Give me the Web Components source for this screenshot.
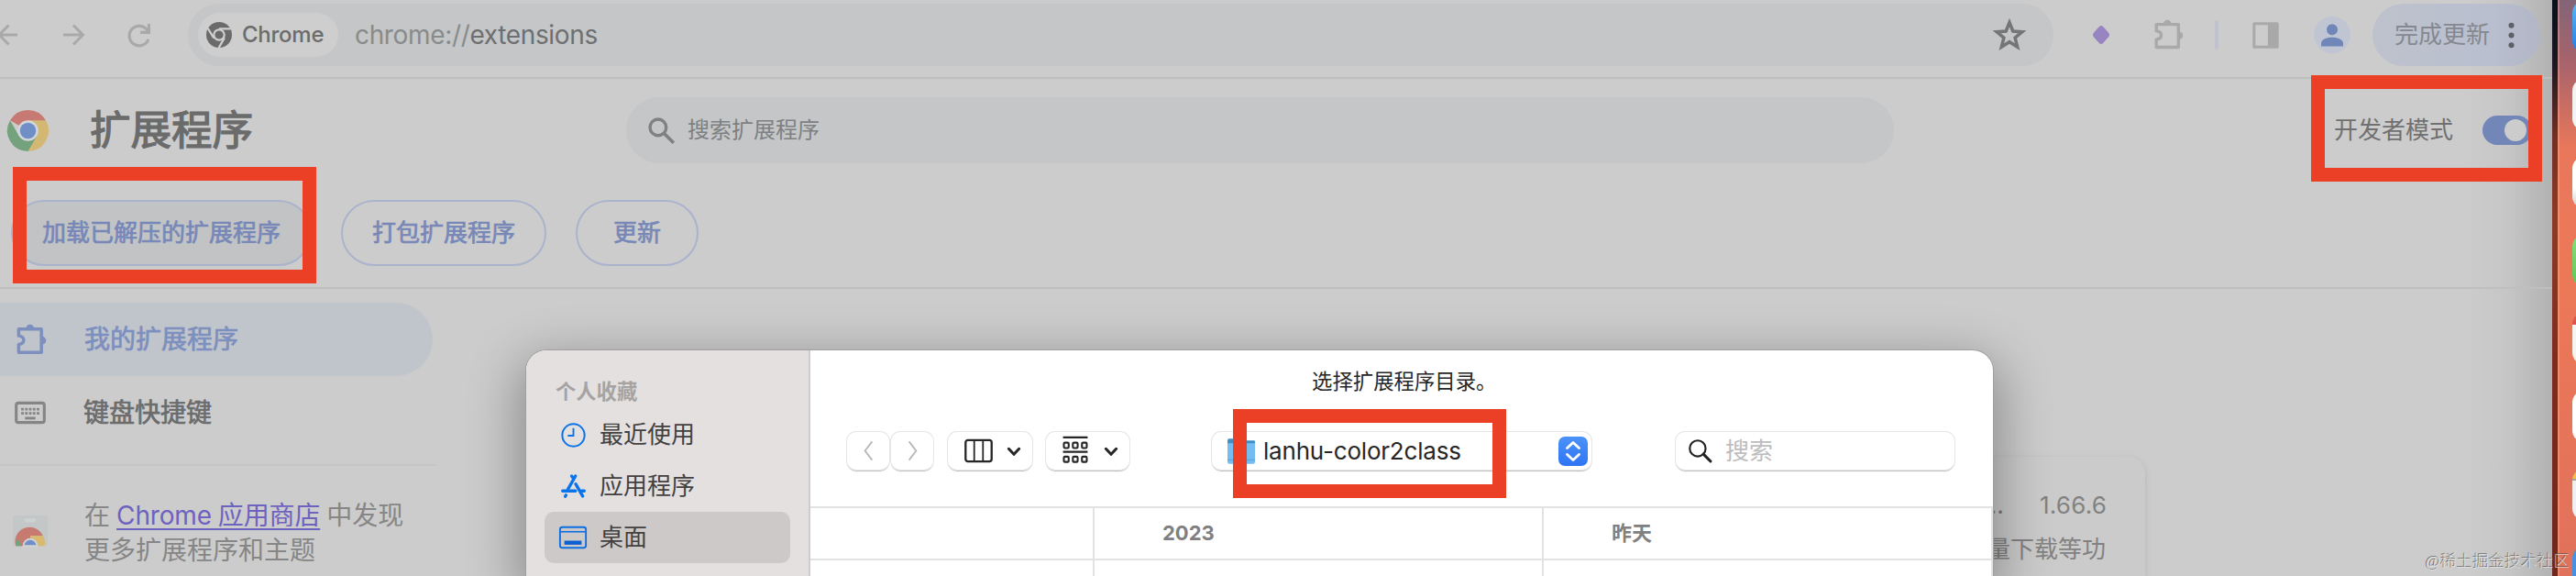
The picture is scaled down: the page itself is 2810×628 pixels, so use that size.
<!DOCTYPE html>
<html lang="zh-CN">
<head>
<meta charset="utf-8">
<title>扩展程序</title>
<style>
  html {
    height: 628px;
    overflow: hidden;
  }
  body {
    margin: 0;
    width: 2810px;
    height: 628px;
    overflow: hidden;
    position: relative;
    display: flex;
    font-family: Inter, "Noto Sans CJK SC", sans-serif;
    line-height: 1;
    background: #ccc;
  }
</style>
</head>
<body>
<browser-window>
  <tool-bar slot="toolbar"></tool-bar>
  <page-header slot="header" heading="扩展程序" placeholder="搜索扩展程序"></page-header>
  <action-bar slot="actions">
    <pill-button active>加载已解压的扩展程序</pill-button>
    <pill-button>打包扩展程序</pill-button>
    <pill-button>更新</pill-button>
  </action-bar>
  <side-menu slot="menu"></side-menu>
  <extension-card slot="card" version="1.66.6"></extension-card>
</browser-window>
<desktop-dock></desktop-dock>
<file-dialog heading="选择扩展程序目录。" folder="lanhu-color2class"></file-dialog>
<red-mark x="14" y="182" w="331" h="127"></red-mark>
<red-mark x="2521" y="82" w="252" h="116"></red-mark>
<red-mark x="1345" y="446" w="298" h="97"></red-mark>
<water-mark>@稀土掘金技术社区</water-mark>

<script>
const icons = {
  back: '<path d="M22 12H2M12.500 1.500 2 12l10.500 10.500" fill="none" stroke="currentColor" stroke-width="3"/>',
  forward: '<path d="M1 12h21M12 1.500 22.500 12 12 22.500" fill="none" stroke="currentColor" stroke-width="3"/>',
  reload: '<path d="M21 7A10.300 10.300 0 1 0 22 16M22.500 0v9H13.500" fill="none" stroke="currentColor" stroke-width="3"/>',
  chromeMono: '<circle cx="12" cy="12" r="12" fill="#6b6b6b"/><circle cx="12" cy="12" r="4.900" fill="#6b6b6b" stroke="#d0d0d0" stroke-width="1.900"/><path d="M12 6.300h11M7 14.900 1.400 5.800M17 14.900 11.700 24" stroke="#d0d0d0" stroke-width="1.900"/>',
  chrome: '<path d="M12 12 1.600 6A12 12 0 0 1 22.400 6Z" fill="#c77a73"/><path d="M12 12V6h10.400A12 12 0 0 1 12 24Z" fill="#d2b873"/><path d="M12 24A12 12 0 0 1 1.600 6L6.800 15 12 12l5.200 3Z" fill="#73a27c"/><circle cx="12" cy="12" r="6" fill="#d3d6db"/><circle cx="12" cy="12" r="4.700" fill="#718fc7"/>',
  search: '<circle cx="9" cy="9" r="7.300" fill="none" stroke="currentColor" stroke-width="2.800"/><path d="m14 14 9 9" stroke="currentColor" stroke-width="3"/>',
  star: '<path d="m12 2.500 2.700 6.700 7.100.500-5.500 4.600 1.800 7L12 17.400l-6.100 3.900 1.800-7-5.500-4.600 7.100-.500Z" fill="none" stroke="currentColor" stroke-width="2.500"/>',
  diamond: '<path d="M9.500 1.200q2.500-2.200 5 0l7.300 8q2 2.800 0 5.600l-7.300 8q-2.500 2.200-5 0l-7.300-8q-2-2.800 0-5.600Z" fill="#9884c0"/>',
  puzzle: '<path d="M3 4h17v17.500H3v-6c5-.500 5-6 0-6.500Z" fill="none" stroke="currentColor" stroke-width="2.400" stroke-linejoin="round"/><path d="M8.500 3.500a3 3 0 0 1 6 0ZM20.500 9.500a3 3 0 0 1 0 6Z" fill="currentColor"/>',
  panel: '<path d="M1.500 1.500h21v21h-21Z" fill="none" stroke="currentColor" stroke-width="2.500" stroke-linejoin="round"/><path d="M14 2h8v20h-8Z" fill="currentColor"/>',
  person: '<circle cx="12" cy="12" r="12" fill="#bfc5d3"/><circle cx="12" cy="8.500" r="3.600" fill="#7186b8"/><path d="M4.800 19.500v-1.800c0-5.500 14.400-5.500 14.400 0v1.800Z" fill="#7186b8"/>',
  dots: '<circle cx="12" cy="2.500" r="2.700"/><circle cx="12" cy="12" r="2.700"/><circle cx="12" cy="21.500" r="2.700"/>',
  keyboard: '<rect x="1.200" y="4.500" width="21.600" height="15" rx="1.700" fill="none" stroke="currentColor" stroke-width="2.200"/><path d="M5 9.300h14M5 12.500h14" stroke="currentColor" stroke-width="1.900" stroke-dasharray="2 1"/><path d="M8 16.200h8" stroke="currentColor" stroke-width="2"/>',
  store: '<path d="M0 1.500A1.500 1.500 0 0 1 1.500 0h21A1.500 1.500 0 0 1 24 1.500V21H0Z" fill="#c3c7c8"/><rect x="8" y="2" width="8" height="2.500" rx="1.200" fill="#d0d2d2"/><path d="M2 21a10 10 0 0 1 18.700-7H12v7Z" fill="#c77a70"/><path d="M2 21a10 10 0 0 1 1.400-5L6.500 21Z" fill="#73a27c"/><path d="M12 14h8.700A10 10 0 0 1 22 21H12Z" fill="#d8b96e"/><path d="M7.300 21a4.700 4.700 0 0 1 9.400 0Z" fill="#718fc7" stroke="#cfd2d6" stroke-width="1.200"/>',
  clock: '<circle cx="12" cy="12" r="10.800" fill="none" stroke="#0b74ea" stroke-width="1.800"/><path d="M12 5v7.500H6.500" fill="none" stroke="#0b74ea" stroke-width="1.700"/>',
  apps: '<g stroke="#0b74ea" stroke-width="3" stroke-linecap="round" fill="none"><path d="M10.300 1.800l1.500 2M14 1.800 6.700 14.500M14.200 9.500l6.800 11.800" /><path d="M1.500 16.200H14M19.800 16.200h2.700M4.800 20.300l-.700 1.200"/></g>',
  desktop: '<rect x=".7" y="3" width="22.600" height="18" rx="2" fill="none" stroke="#0b6fe2" stroke-width="1.500"/><path d="M1 7h22" stroke="#0b6fe2" stroke-width="1.300"/><path d="M4.500 14.800h15v3.500h-15Z" fill="#0b5fd0"/>',
  left: '<path d="M16 1.500 8 12l8 10.500" fill="none" stroke="currentColor" stroke-width="2"/>',
  right: '<path d="m8 1.500 8 10.500-8 10.500" fill="none" stroke="currentColor" stroke-width="2"/>',
  down: '<path d="m3.500 8 8.500 9 8.500-9" fill="none" stroke="currentColor" stroke-width="4.500" stroke-linecap="round" stroke-linejoin="round"/>',
  columns: '<rect x="1" y="3" width="22" height="18" rx="2" fill="none" stroke="currentColor" stroke-width="1.800"/><path d="M8.300 3v18M15.700 3v18" stroke="currentColor" stroke-width="1.400"/>',
  groups: '<g fill="none" stroke="currentColor" stroke-width="1.800"><path d="M.5 -1h23M.5 12.500h23"/><rect x="1.300" y="4" width="4.500" height="5" rx="1"/><rect x="9.700" y="4" width="4.500" height="5" rx="1"/><rect x="18.200" y="4" width="4.500" height="5" rx="1"/><rect x="1.300" y="17" width="4.500" height="5" rx="1"/><rect x="9.700" y="17" width="4.500" height="5" rx="1"/><rect x="18.200" y="17" width="4.500" height="5" rx="1"/></g>',
  folder: '<path d="M0 2.500Q0 1 1.500 1h6L9 2.500h14q1 0 1 1V7H0Z" fill="#3f8fc4"/><path d="M0 5h24v16q0 2-2 2H2q-2 0-2-2Z" fill="#75bdf0"/><path d="M0 19.500h24" stroke="#5ba6da"/>',
  stepper: '<path d="m6 8.700 6-5.500 6 5.500M6 15.300l6 5.500 6-5.500" fill="none" stroke="#fff" stroke-width="2.600" stroke-linecap="round" stroke-linejoin="round"/>',
  glass: '<circle cx="9.500" cy="9.500" r="8.300" fill="none" stroke="currentColor" stroke-width="2.100"/><path d="m15.500 15.500 7.500 7.500" stroke="currentColor" stroke-width="2.900" stroke-linecap="round"/>'
};

class BaseElement extends HTMLElement {
  connectedCallback() {
    if (this.shadowRoot) return;
    this.attachShadow({ mode: 'open' });
    const template = document.createElement('template');
    template.innerHTML = `<style>${this.styles()}</style>${this.markup()}`;
    this.shadowRoot.appendChild(template.content.cloneNode(true));
  }
}

/* <svg-icon name size>: one glyph of the table above, on a 24 unit grid */
class SvgIcon extends BaseElement {
  styles() {
    const size = this.getAttribute('size') || 24;
    return `
    :host { display: block; flex: none; width: ${size}px; height: ${size}px; }
    svg { display: block; width: 100%; height: 100%; overflow: visible; fill: currentColor; }
    `;
  }
  markup() {
    return `<svg viewBox="0 0 24 24">${icons[this.getAttribute('name')]}</svg>`;
  }
}
customElements.define('svg-icon', SvgIcon);

class BrowserWindow extends BaseElement {
  styles() {
    return `
    :host {
      display: flex;
      flex-direction: column;
      flex: none;
      width: 2784px;
      height: 628px;
      overflow: hidden;
      background: linear-gradient(90deg, #ccc 2690px, #c6c6c6 2735px, #b2b2b2 2784px);
    }
    .body { display: flex; justify-content: space-between; align-items: flex-start; }
    .card { padding: 183px 444px 0 0; }
    `;
  }
  markup() {
    return `
    <slot name="toolbar"></slot>
    <slot name="header"></slot>
    <slot name="actions"></slot>
    <div class="body">
      <slot name="menu"></slot>
      <div class="card"><slot name="card"></slot></div>
    </div>`;
  }
}
customElements.define('browser-window', BrowserWindow);

class ToolBar extends BaseElement {
  styles() {
    return `
    :host {
      box-sizing: border-box;
      display: flex;
      align-items: center;
      flex: none;
      height: 86px;
      padding-bottom: 8px;
      border-bottom: 2px solid #bebfbf;
      color: #a9a9a9;
    }
    .nav { display: flex; gap: 47px; width: 205px; }
    .omnibox {
      box-sizing: border-box;
      display: flex;
      align-items: center;
      width: 2035px;
      height: 68px;
      padding: 0 31px 0 11px;
      border-radius: 34px;
      background: #c4c6c8;
    }
    .chip {
      box-sizing: border-box;
      display: flex;
      align-items: center;
      gap: 11px;
      width: 153px;
      height: 48px;
      padding-left: 9px;
      border-radius: 24px;
      background: #cecece;
      color: #6c6c6c;
      font-size: 24px;
      font-weight: 500;
      letter-spacing: -.25px;
    }
    .url { flex: 1; padding-left: 18px; font-size: 28px; letter-spacing: -.35px; color: #888b8c; }
    .url b { font-weight: 400; color: #6d6f70; }
    .star { color: #737576; }
    .tools { display: flex; align-items: center; }
    .divider { width: 4px; height: 32px; margin: 0 37px 0 34px; border-radius: 2px; background: #c0c3cf; }
    .update {
      box-sizing: border-box;
      display: flex;
      align-items: center;
      justify-content: space-between;
      width: 183px;
      height: 68px;
      margin-left: 24px;
      padding: 0 18px 0 24px;
      border-radius: 34px;
      background: linear-gradient(90deg, #bdc2cc, #b9bfcf 70%, #b2b6c6);
      color: #85888f;
      font-size: 26px;
    }
    .update svg-icon { color: #5d6068; }
    `;
  }
  markup() {
    return `
    <div class="nav">
      <svg-icon name="back" size="24" style="margin-left:-3px"></svg-icon>
      <svg-icon name="forward" size="24"></svg-icon>
      <svg-icon name="reload" size="25"></svg-icon>
    </div>
    <div class="omnibox">
      <div class="chip"><svg-icon name="chromeMono" size="28"></svg-icon>Chrome</div>
      <div class="url">chrome://<b>extensions</b></div>
      <svg-icon class="star" name="star" size="34"></svg-icon>
    </div>
    <div class="tools">
      <svg-icon name="diamond" size="20" style="margin-left:42px"></svg-icon>
      <svg-icon name="puzzle" size="34" style="margin-left:46px"></svg-icon>
      <div class="divider"></div>
      <svg-icon name="panel" size="29"></svg-icon>
      <svg-icon name="person" size="40" style="margin-left:38px"></svg-icon>
      <div class="update">完成更新<svg-icon name="dots" size="27"></svg-icon></div>
    </div>`;
  }
}
customElements.define('tool-bar', ToolBar);

class PageHeader extends BaseElement {
  styles() {
    return `
    :host { display: flex; align-items: center; flex: none; height: 112px; }
    .title { display: flex; align-items: center; gap: 45px; width: 675px; padding-left: 8px; color: #6b6b6b; font-size: 44.500px; -webkit-text-stroke: 1.300px; }
    .search {
      box-sizing: border-box;
      display: flex;
      align-items: center;
      gap: 14px;
      width: 1383px;
      height: 72px;
      padding-left: 24px;
      border-radius: 36px;
      background: #c4c6c8;
      color: #7e8081;
      font-size: 24px;
    }
    .dev { display: flex; align-items: center; gap: 32px; margin-left: 480px; color: #707070; font-size: 26px; }
    .toggle { box-sizing: border-box; width: 54px; height: 32px; padding: 4px; border-radius: 16px; background: #7287b8; }
    .knob { width: 24px; height: 24px; margin-left: 20px; border-radius: 50%; background: #ccc; }
    `;
  }
  markup() {
    return `
    <div class="title"><svg-icon name="chrome" size="45"></svg-icon>${this.getAttribute('heading')}</div>
    <div class="search"><svg-icon name="search" size="29"></svg-icon>${this.getAttribute('placeholder')}</div>
    <div class="dev">开发者模式<div class="toggle"><div class="knob"></div></div></div>`;
  }
}
customElements.define('page-header', PageHeader);

class ActionBar extends BaseElement {
  styles() {
    return `
    :host {
      box-sizing: border-box;
      display: flex;
      align-items: flex-start;
      gap: 32px;
      flex: none;
      height: 117px;
      padding: 20px 0 0 12px;
      border-bottom: 2px solid #bfbfbf;
    }
    `;
  }
  markup() {
    return '<slot></slot>';
  }
}
customElements.define('action-bar', ActionBar);

class PillButton extends BaseElement {
  styles() {
    return `
    :host {
      box-sizing: border-box;
      display: flex;
      align-items: center;
      height: 72px;
      padding: 0 32px;
      border: 2px solid #a9b3cc;
      border-radius: 36px;
      color: #7788b8;
      font-size: 26px;
      -webkit-text-stroke: .7px;
    }
    :host([active]) { background: #c2c3c4; }
    :host(:not([active]):nth-child(3)) { padding: 0 39px; }
    `;
  }
  markup() {
    return '<slot></slot>';
  }
}
customElements.define('pill-button', PillButton);

class SideMenu extends BaseElement {
  styles() {
    return `
    :host { display: flex; flex-direction: column; width: 476px; padding-top: 15px; font-size: 28px; }
    .item { box-sizing: border-box; display: flex; align-items: center; gap: 41px; width: 472px; height: 80px; padding-left: 16px; color: #6c6c6c; -webkit-text-stroke: .7px; }
    .item.on { border-radius: 0 40px 40px 0; background: #c0c4cb; color: #7c8fbe; }
    .item:not(.on) svg-icon { color: #858585; }
    .store { box-sizing: border-box; display: flex; align-items: center; gap: 40px; margin-top: 16px; padding: 35px 0 0 14px; border-top: 2px solid #c4c4c4; line-height: 38px; word-spacing: -.800px; color: #868686; white-space: nowrap; }
    a { color: #6e62bf; letter-spacing: -.150px; text-decoration: underline; text-decoration-thickness: 2px; text-underline-offset: 4px; }
    `;
  }
  markup() {
    return `
    <div class="item on"><svg-icon name="puzzle" size="35"></svg-icon>我的扩展程序</div>
    <div class="item"><svg-icon name="keyboard" size="34"></svg-icon>键盘快捷键</div>
    <div class="store">
      <svg-icon name="store" size="38"></svg-icon>
      <div>在 <a>Chrome 应用商店</a> 中发现<br>更多扩展程序和主题</div>
    </div>`;
  }
}
customElements.define('side-menu', SideMenu);

/* mostly hidden by the dialog, only the right end of its lines shows */
class ExtensionCard extends BaseElement {
  styles() {
    return `
    :host {
      box-sizing: border-box;
      display: flex;
      flex-direction: column;
      align-items: flex-end;
      width: 400px;
      height: 130px;
      padding: 33px 43px 0 0;
      border-radius: 18px 18px 0 0;
      background: #cbcbcb;
      box-shadow: 0 2px 6px 0 #b4b4b4;
      color: #828282;
      font-size: 26px;
    }
    div { height: 48px; line-height: 40px; white-space: pre; }
    .version { margin-right: -1px; letter-spacing: .2px; }
    span { margin-right: 39px; color: #757575; }
    `;
  }
  markup() {
    return `<div class="version"><span>...</span>${this.getAttribute('version')}</div><div>量下载等功</div>`;
  }
}
customElements.define('extension-card', ExtensionCard);

class FileDialog extends BaseElement {
  styles() {
    return `
    :host {
      box-sizing: border-box;
      position: absolute;
      left: 574px;
      top: 382px;
      display: flex;
      width: 1600px;
      height: 246px;
      border-radius: 22px 22px 0 0;
      overflow: hidden;
      background: #fff;
      box-shadow: 0 0 0 1px #a0a0a0, 0 18px 56px 8px rgba(0, 0, 0, .32);
      color: #262626;
    }
    aside { box-sizing: border-box; flex: none; width: 310px; padding: 28px 20px 0; border-right: 2px solid #cfcdcc; background: #e3e0df; font-size: 26px; color: #434140; }
    h4 { margin: 0 0 0 12px; height: 36px; line-height: 33px; font-size: 22.300px; font-weight: 700; color: #a6a3a2; }
    .place { display: flex; align-items: center; gap: 15px; height: 56px; padding-left: 18px; border-radius: 10px; }
    .place.on { background: #cdc9c8; }
    main { display: flex; flex-direction: column; flex: 1; }
    .heading { height: 68px; line-height: 68px; padding-left: 547px; font-size: 22.400px; }
    .bar { box-sizing: border-box; display: flex; align-items: flex-start; height: 102px; padding: 21px 0 0 40px; }
    .box { box-sizing: border-box; display: flex; align-items: center; height: 41px; border-radius: 10px; background: #fff; box-shadow: 0 0 0 1px #e6e6e6, 0 2px 1px #bcbcbc; }
    .nav { width: 46px; justify-content: center; color: #b9b9b9; margin-right: 2px; }
    .view { width: 92px; justify-content: space-between; padding: 0 12px 0 18px; margin-left: 14px; }
    .view + .view { width: 91px; margin-left: 15px; }
    .folder { width: 414px; margin-left: 90px; padding: 0 4px 0 17px; gap: 9px; font-size: 26px; }
    .folder span { flex: 1; letter-spacing: -.200px; white-space: nowrap; }
    .step { display: flex; align-items: center; justify-content: center; width: 32px; height: 32px; border-radius: 7px; background: linear-gradient(#4b92f8, #2f74f4); }
    .find { width: 304px; margin-left: 92px; padding-left: 14px; gap: 15px; font-size: 26px; color: #bdbdbd; }
    .find svg-icon { color: #222; }
    .columns { display: flex; flex: 1; border-top: 2px solid #e2e2e2; font-size: 22px; font-weight: 700; color: #808080; }
    .column { box-sizing: border-box; border-right: 2px solid #e2e2e2; }
    .column div { box-sizing: border-box; height: 57px; line-height: 55px; padding-left: 74px; border-bottom: 2px solid #e2e2e2; }
    `;
  }
  markup() {
    return `
    <aside>
      <h4>个人收藏</h4>
      <div class="place"><svg-icon name="clock" size="27"></svg-icon>最近使用</div>
      <div class="place"><svg-icon name="apps" size="27"></svg-icon>应用程序</div>
      <div class="place on"><svg-icon name="desktop" size="30" style="margin:0 -1px 0 -2px"></svg-icon>桌面</div>
    </aside>
    <main>
      <div class="heading">${this.getAttribute('heading')}</div>
      <div class="bar">
        <div class="box nav"><svg-icon name="left" size="23"></svg-icon></div>
        <div class="box nav"><svg-icon name="right" size="23"></svg-icon></div>
        <div class="box view"><svg-icon name="columns" size="31"></svg-icon><svg-icon name="down" size="16"></svg-icon></div>
        <div class="box view"><svg-icon name="groups" size="28"></svg-icon><svg-icon name="down" size="16"></svg-icon></div>
        <div class="box folder">
          <svg-icon name="folder" size="30"></svg-icon>
          <span>${this.getAttribute('folder')}</span>
          <div class="step"><svg-icon name="stepper" size="26"></svg-icon></div>
        </div>
        <div class="box find"><svg-icon name="glass" size="25"></svg-icon>搜索</div>
      </div>
      <div class="columns">
        <div class="column" style="width:310px"><div></div></div>
        <div class="column" style="width:490px"><div>2023</div></div>
        <div class="column" style="width:490px"><div>昨天</div></div>
      </div>
    </main>`;
  }
}
customElements.define('file-dialog', FileDialog);

/* strip of desktop at the right of the window, with the edge of the dock icons */
class DesktopDock extends BaseElement {
  styles() {
    return `
    :host {
      box-sizing: border-box;
      display: flex;
      flex-direction: column;
      align-items: flex-end;
      gap: 27px;
      width: 26px;
      height: 628px;
      overflow: hidden;
      border-left: 6px solid;
      border-image: linear-gradient(#06101d 0, #1b1622 70px, #722f25 150px, #8c3a27 240px, #7d2b20 400px, #6e261e) 0 0 0 6;
      background: linear-gradient(#846478 0, #a9636b 70px, #e8775b 160px, #ec7857 300px, #e0715a 628px);
      box-shadow: inset 2px 0 rgba(255, 190, 150, .35);
    }
    i { flex: none; width: 60px; height: 58px; margin-right: -56px; border-radius: 14px; background: #fff; }
    i:last-child { height: 33px; border-radius: 14px 14px 0 0; }
    `;
  }
  markup() {
    const fills = [
      'linear-gradient(#5cb9ef, #2479e8)',
      '#f4f3f4',
      'linear-gradient(#fff 60%, #ccc)',
      'linear-gradient(#83e07a, #5bc854)',
      'linear-gradient(#e0534c 14px, #f7f4ef 14px)',
      '#fff',
      'linear-gradient(#f1c044 12px, #a8a49c 12px 14px, #f2f0ee 14px)',
      '#4591e2'
    ];
    return fills.map((fill) => `<i style="background:${fill}"></i>`).join('');
  }
}
customElements.define('desktop-dock', DesktopDock);

class RedMark extends BaseElement {
  styles() {
    const px = (name) => `${this.getAttribute(name)}px`;
    return `
    :host {
      box-sizing: border-box;
      position: absolute;
      left: ${px('x')};
      top: ${px('y')};
      width: ${px('w')};
      height: ${px('h')};
      border: 15px solid #eb4025;
    }
    `;
  }
  markup() {
    return '';
  }
}
customElements.define('red-mark', RedMark);

class WaterMark extends BaseElement {
  styles() {
    return `
    :host {
      position: absolute;
      right: 7px;
      bottom: 4px;
      font-family: "Liberation Serif", "Noto Sans CJK SC", serif;
      font-size: 17.600px;
      font-weight: 300;
      line-height: 24px;
      color: rgba(235, 235, 235, .75);
      text-shadow: -1px -1px 0 rgba(70, 70, 70, .7);
    }
    `;
  }
  markup() {
    return '<slot></slot>';
  }
}
customElements.define('water-mark', WaterMark);
</script>
</body>
</html>
